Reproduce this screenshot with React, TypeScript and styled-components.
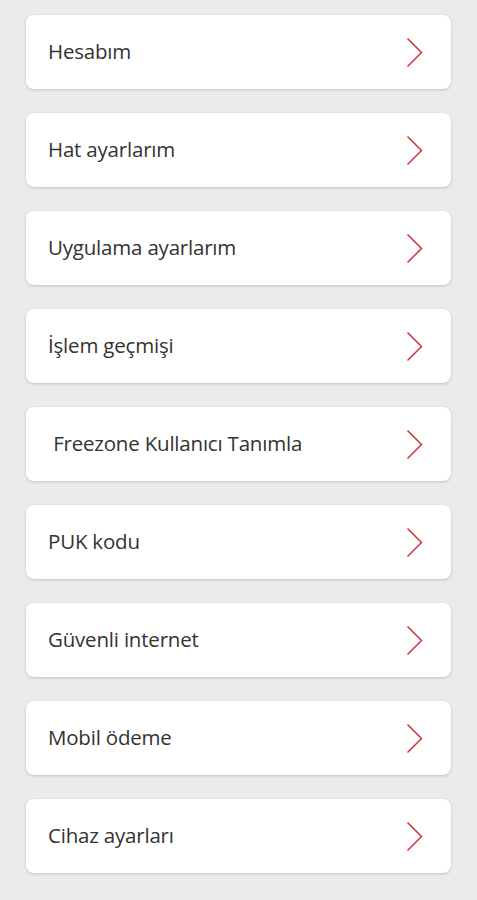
import React from 'react'
import styled, { createGlobalStyle } from 'styled-components'

const GlobalStyle = createGlobalStyle`
  html, body {
    margin: 0;
    padding: 0;
    background: #ebebeb;
  }
  body {
    font-family: "Open Sans", "Liberation Sans", sans-serif;
  }
`

const items = [
  'Hesabım',
  'Hat ayarlarım',
  'Uygulama ayarlarım',
  'İşlem geçmişi',
  '\u00a0Freezone Kullanıcı Tanımla',
  'PUK kodu',
  'Güvenli internet',
  'Mobil ödeme',
  'Cihaz ayarları',
]

const Chevron: React.FC = () => (
  <svg width="17" height="31" viewBox="0 0 17 31" fill="none">
    <path d="M1.5 1.5 L15.5 15.5 L1.5 29.5" stroke="#d0343e" strokeWidth="1.5" strokeLinejoin="miter" />
  </svg>
)

const App: React.FC = () => {
  return (
    <>
      <GlobalStyle />
      <Page>
        {items.map((label) => (
          <Card key={label}>
            <Label>{label}</Label>
            <Chevron />
          </Card>
        ))}
      </Page>
    </>
  )
}

const Page = styled.div`
  display: flex;
  flex-direction: column;
  gap: 24px;
  padding: 15px 26px 27px 26px;
  min-height: 900px;
  box-sizing: border-box;
  background: #ebebeb;
`

const Card = styled.div`
  display: flex;
  align-items: center;
  justify-content: space-between;
  height: 74px;
  box-sizing: border-box;
  padding: 0 28px 0 22px;
  background: #fff;
  border-radius: 8px;
  box-shadow: 0 1px 3px rgba(0, 0, 0, 0.18);
`

const Label = styled.span`
  font-size: 20.5px;
  line-height: 28px;
  margin-bottom: 3px;
  color: #333;
  letter-spacing: -0.2px;
  white-space: pre;
`

export default App
